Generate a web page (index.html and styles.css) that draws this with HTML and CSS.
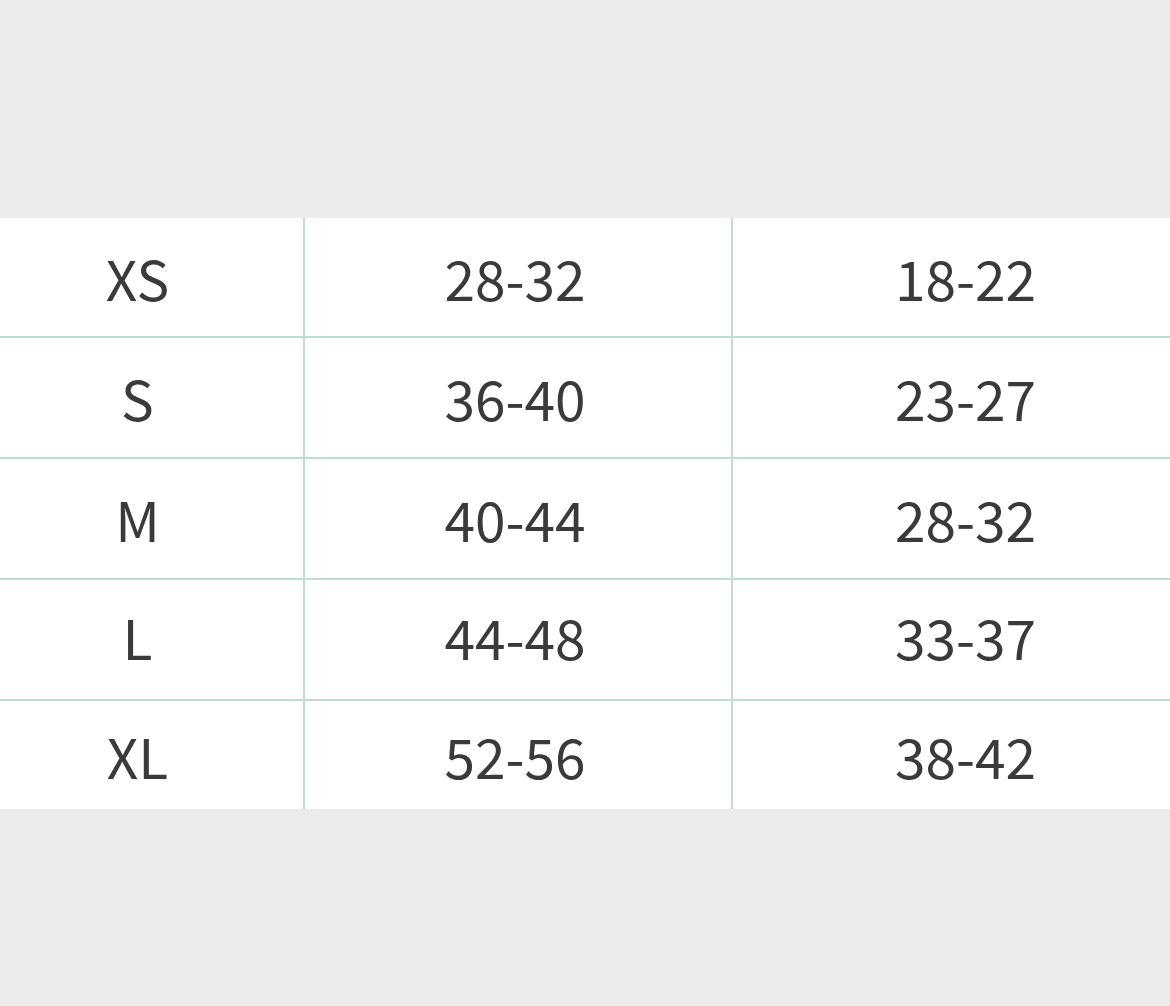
FILE: index.html
```html
<!DOCTYPE html>
<html>
<head>
<meta charset="utf-8">
<link rel="stylesheet" href="styles.css">
</head>
<body>
<div class="wrap">
<table class="sizes">
<colgroup><col class="c1"><col class="c2"><col class="c3"></colgroup>
<tr class="first"><td>XS</td><td>28-32</td><td>18-22</td></tr>
<tr><td>S</td><td>36-40</td><td>23-27</td></tr>
<tr><td>M</td><td>40-44</td><td>28-32</td></tr>
<tr class="raised"><td>L</td><td>44-48</td><td>33-37</td></tr>
<tr class="last"><td>XL</td><td>52-56</td><td>38-42</td></tr>
</table>
</div>
</body>
</html>
```
FILE: styles.css
```css
html, body {
  margin: 0;
  padding: 0;
  background: #ececec;
  overflow: hidden;
}
.wrap {
  padding-top: 218px;
  width: 1170px;
  overflow: hidden;
}
.sizes {
  margin-left: -28px;
  width: 1226px;
  border-collapse: collapse;
  background: #fff;
  table-layout: fixed;
  font-family: "Noto Sans CJK SC", "Noto Sans", sans-serif;
  font-size: 55px;
  font-weight: 400;
  color: #3a3a3a;
}
.c1 { width: 332px; }
.c2 { width: 428px; }
.c3 { width: 466px; }
.sizes td {
  height: 121px;
  padding: 0;
  box-sizing: border-box;
  text-align: center;
  vertical-align: middle;
  border-bottom: 2px solid #bcdcd7;
  border-left: 2px solid #bcdcd7;
  line-height: 1;
}
.sizes td:nth-child(2) { padding-right: 6px; }
.sizes td:first-child { border-left: none; }
.sizes tr.first td { height: 119px; }
.sizes tr.raised td { padding-bottom: 6px; }
.sizes tr.last td {
  border-bottom: none;
  height: 109px;
}
```
